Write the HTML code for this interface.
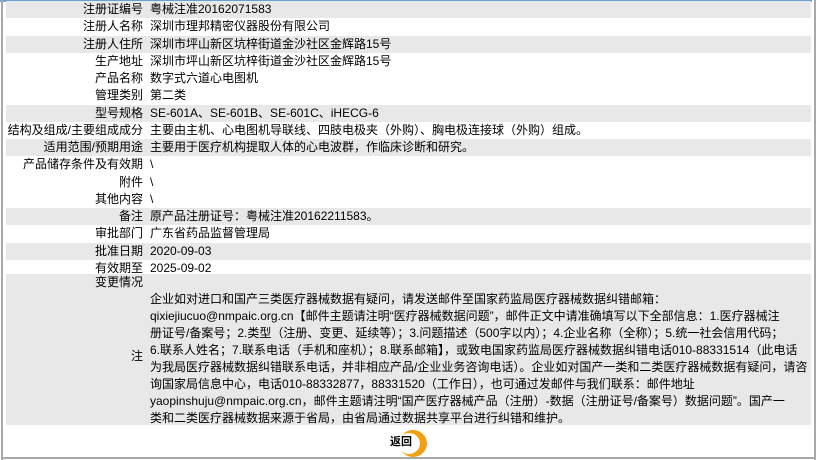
<!DOCTYPE html>
<html><head><meta charset="utf-8"><style>
*{margin:0;padding:0;box-sizing:border-box}
body{width:817px;height:460px;background:#fff;position:relative;overflow:hidden;font-family:"Liberation Sans","Noto Sans CJK SC",sans-serif;font-size:12px;color:#000}
.top{position:absolute;left:0;top:0;width:812px;height:1.5px;background:#6a9fd4}
.lb{position:absolute;left:1px;top:0;width:2px;height:460px;background:#a8a8a8}
.rb{position:absolute;left:814px;top:0;width:2px;height:460px;background:#a8a8a8}
.bb{position:absolute;left:1px;top:457px;width:815px;height:2px;background:#a8a8a8}
.row{position:absolute;left:6px;width:805px;height:17.25px;line-height:17.25px}
.g{background:#e8e8e8}
.l{position:absolute;right:668px;text-align:right;white-space:nowrap}
.v{position:absolute;left:144px;white-space:nowrap}
.note{position:absolute;left:6px;top:274px;width:805px;height:151px;background:#e8e8e8}
.nl{position:absolute;left:144px;top:17px;line-height:17px;white-space:nowrap}
</style></head><body>
<div class="top"></div><div class="lb"></div><div class="rb"></div><div class="bb"></div>
<div class="row g" style="top:1px"><span class="l">注册证编号</span><span class="v">粤械注准20162071583</span></div>
<div class="row" style="top:18.25px"><span class="l">注册人名称</span><span class="v">深圳市理邦精密仪器股份有限公司</span></div>
<div class="row g" style="top:35.5px"><span class="l">注册人住所</span><span class="v">深圳市坪山新区坑梓街道金沙社区金辉路15号</span></div>
<div class="row" style="top:52.75px"><span class="l">生产地址</span><span class="v">深圳市坪山新区坑梓街道金沙社区金辉路15号</span></div>
<div class="row" style="top:70px"><span class="l">产品名称</span><span class="v">数字式六道心电图机</span></div>
<div class="row" style="top:87.25px"><span class="l">管理类别</span><span class="v">第二类</span></div>
<div class="row g" style="top:104.5px"><span class="l">型号规格</span><span class="v">SE-601A、SE-601B、SE-601C、iHECG-6</span></div>
<div class="row" style="top:121.75px"><span class="l">结构及组成/主要组成成分</span><span class="v">主要由主机、心电图机导联线、四肢电极夹（外购）、胸电极连接球（外购）组成。</span></div>
<div class="row g" style="top:139px"><span class="l">适用范围/预期用途</span><span class="v">主要用于医疗机构提取人体的心电波群，作临床诊断和研究。</span></div>
<div class="row" style="top:156.25px"><span class="l">产品储存条件及有效期</span><span class="v">\</span></div>
<div class="row" style="top:173.5px"><span class="l">附件</span><span class="v">\</span></div>
<div class="row" style="top:190.75px"><span class="l">其他内容</span><span class="v">\</span></div>
<div class="row g" style="top:208px"><span class="l">备注</span><span class="v">原产品注册证号：粤械注准20162211583。</span></div>
<div class="row" style="top:225.25px"><span class="l">审批部门</span><span class="v">广东省药品监督管理局</span></div>
<div class="row g" style="top:242.5px"><span class="l">批准日期</span><span class="v">2020-09-03</span></div>
<div class="row" style="top:259.75px"><span class="l">有效期至</span><span class="v">2025-09-02</span></div>
<div class="note">
<div style="position:absolute;right:668px;top:0;line-height:17px">变更情况</div>
<div style="position:absolute;right:668px;top:74px;line-height:17px">注</div>
<div class="nl">企业如对进口和国产三类医疗器械数据有疑问，请发送邮件至国家药监局医疗器械数据纠错邮箱：<br>qixiejiucuo@nmpaic.org.cn【邮件主题请注明“医疗器械数据问题”，邮件正文中请准确填写以下全部信息：1.医疗器械注<br>册证号/备案号；2.类型（注册、变更、延续等）；3.问题描述（500字以内）；4.企业名称（全称）；5.统一社会信用代码；<br>6.联系人姓名；7.联系电话（手机和座机）；8.联系邮箱】，或致电国家药监局医疗器械数据纠错电话010-88331514（此电话<br>为我局医疗器械数据纠错联系电话，并非相应产品/企业业务咨询电话）。企业如对国产一类和二类医疗器械数据有疑问，请咨<br>询国家局信息中心，电话010-88332877，88331520（工作日），也可通过发邮件与我们联系：邮件地址<br>yaopinshuju@nmpaic.org.cn，邮件主题请注明“国产医疗器械产品（注册）-数据（注册证号/备案号）数据问题”。国产一<br>类和二类医疗器械数据来源于省局，由省局通过数据共享平台进行纠错和维护。</div>
</div>
<div style="position:absolute;left:399px;top:430px;width:28px;height:27px;border-radius:50%;background:#f0a010"></div>
<div style="position:absolute;left:398px;top:433px;width:22px;height:21px;border-radius:50%;background:#fff"></div>
<div style="position:absolute;left:390px;top:435px;font-size:11px;font-weight:bold;line-height:14px">返回</div>
</body></html>
